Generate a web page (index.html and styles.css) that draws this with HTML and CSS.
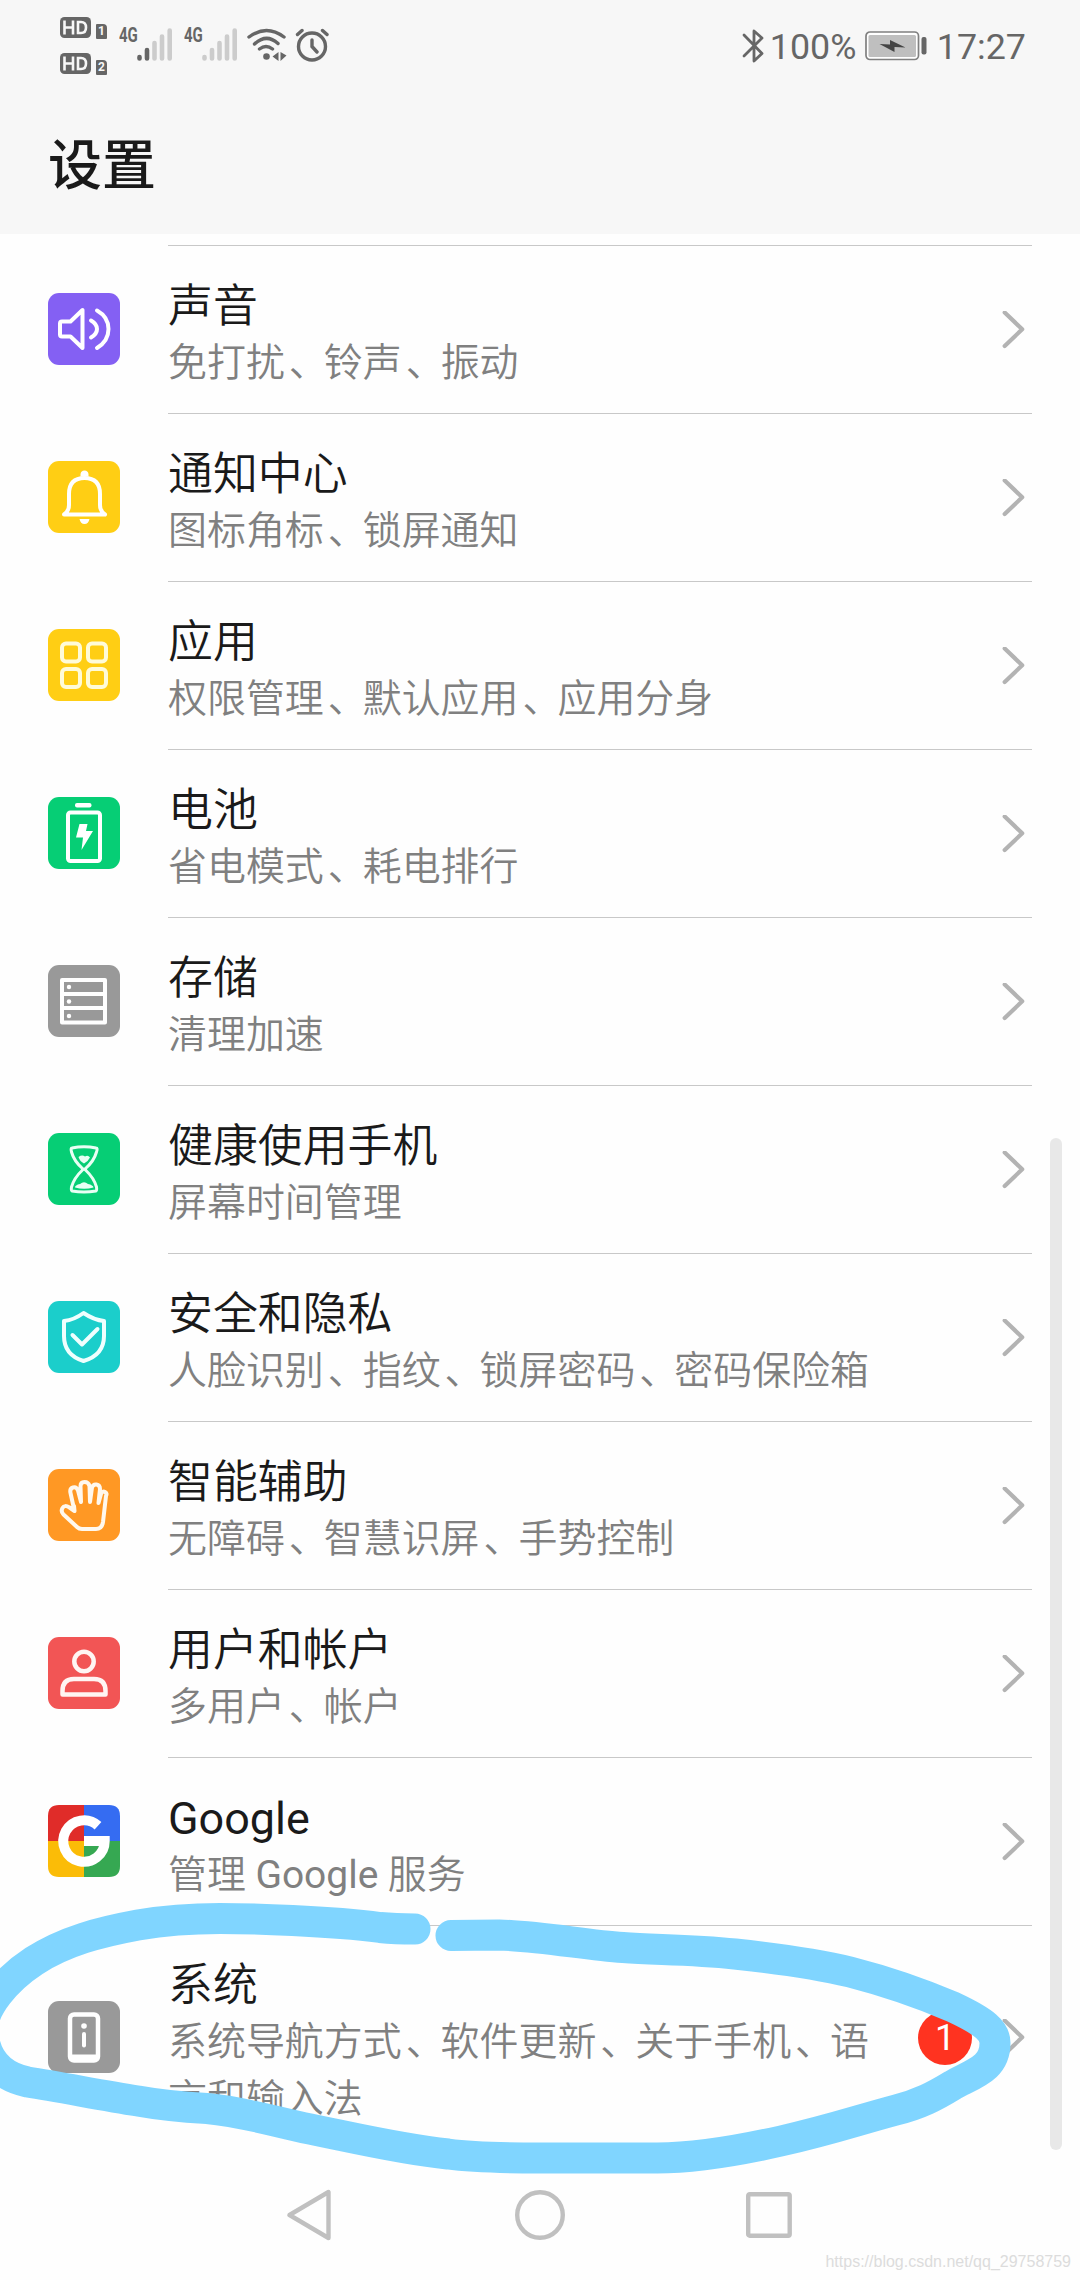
FILE: index.html
```html
<!DOCTYPE html>
<html lang="zh-CN">
<head>
<meta charset="utf-8">
<title>设置</title>
<link rel="stylesheet" href="styles.css">
</head>
<body>
<div class="screen">
  <header class="header">
    <div class="status">
      <div class="hd-stack">
        <div class="hd-row">
          <svg width="31" height="21" viewBox="0 0 31 21"><rect width="31" height="21" rx="4.5" fill="#666"/><path d="M4.5 3.500V17.500M13 3.500V17.500M4.500 10.500H13M18 5V16H21Q26 16 26 10.500T21 5Z" fill="none" stroke="#f7f7f7" stroke-width="2.600"/></svg>
          <span class="sim">1</span>
        </div>
        <div class="hd-row">
          <svg width="31" height="21" viewBox="0 0 31 21"><rect width="31" height="21" rx="4.5" fill="#666"/><path d="M4.5 3.500V17.500M13 3.500V17.500M4.500 10.500H13M18 5V16H21Q26 16 26 10.500T21 5Z" fill="none" stroke="#f7f7f7" stroke-width="2.600"/></svg>
          <span class="sim">2</span>
        </div>
      </div>
      <div class="signal">
        <span class="net">4G</span>
        <svg width="36" height="34" viewBox="0 0 36 34" stroke-width="4.600" stroke-linecap="round"><path d="M2.500 29V30.500M10 22V30.500" stroke="#666"/><path d="M17.500 15V30.500M25 8.500V30.500M32.700 2.500V30.500" stroke="#ccc"/></svg>
      </div>
      <div class="signal">
        <span class="net">4G</span>
        <svg width="36" height="34" viewBox="0 0 36 34" stroke-width="4.600" stroke-linecap="round" stroke="#ccc"><path d="M2.500 29V30.500M10 22V30.500M17.500 15V30.500M25 8.500V30.500M32.700 2.500V30.500"/></svg>
      </div>
      <svg class="wifi" width="40" height="34" viewBox="0 0 40 34"><path d="M2 9Q19.500-4 37 9M7.500 16Q19.500 5 31 15.500M12.500 21Q19 16 25.500 21" fill="none" stroke="#666" stroke-width="3.400" stroke-linecap="round"/><circle cx="19.500" cy="28.500" r="3.300" fill="#666"/><path d="M25.500 28.500L31.500 24V33ZM33.500 24L39.500 27.500L33.500 33Z" fill="#666"/></svg>
      <svg class="alarm" width="34" height="34" viewBox="0 0 34 34" fill="none" stroke="#666" stroke-width="3.400" stroke-linecap="round"><circle cx="17" cy="18.500" r="13.500"/><path d="M2.500 6.500L7 2.500M27.500 2.500L32 6.500M17 12V18.500L22 24"/></svg>
      <div class="status-right">
        <svg width="22" height="36" viewBox="0 0 22 36" fill="none" stroke="#666" stroke-width="2.800" stroke-linejoin="round" stroke-linecap="round"><path d="M2 7L20 25.500L12 33V3L20 10L2 28"/></svg>
        <span class="pct">100%</span>
        <svg class="batt" width="62" height="30" viewBox="0 0 62 30"><rect x="1" y="1" width="52.500" height="27.500" rx="4" fill="#fff" stroke="#808080" stroke-width="1.700"/><rect x="3.500" y="4" width="47.500" height="22" rx="1.500" fill="#bfbfbf"/><path d="M14.500 13L25 13.500V9L40.500 16.500L29.500 16V21Z" fill="#444"/><rect x="56.500" y="6" width="5" height="17.500" rx="2" fill="#666"/></svg>
        <span class="time">17:27</span>
      </div>
    </div>
    <h1 class="heading">设置</h1>
  </header>

  <main class="list">
    <div class="row">
      <svg class="icon" viewBox="0 0 72 72"><rect width="72" height="72" rx="11" fill="#8460f3"/><g fill="none" stroke="#fff" stroke-width="4" stroke-linecap="round" stroke-linejoin="round"><path d="M12 30.500Q12 28.500 14 28.500H22.500L34.500 17V55L22.500 43.500H14Q12 43.500 12 41.500ZM43 27.500Q49 31 49 36T43 44.500M49 17.500Q60.500 24 60.500 36T49 55"/></g></svg>
      <div class="body"><div class="text"><div class="title">声音</div><div class="sub">免打扰<span class="sep">、</span>铃声<span class="sep">、</span>振动</div></div><svg class="chev" viewBox="0 0 24 38"><path d="M3.700 1.500L21.200 18.300L3.700 35"/></svg></div>
    </div>
    <div class="row">
      <svg class="icon" viewBox="0 0 72 72"><rect width="72" height="72" rx="11" fill="#ffce14"/><path d="M16 53.500Q21 50 21 44V33Q21 17 36.500 17T52 33V44Q52 50 57 53.500Z" fill="none" stroke="#fff" stroke-width="4" stroke-linejoin="round"/><path d="M32.500 15.500V13Q33 9.500 36.500 9.500T40.500 13V15.500ZM31.500 58H41.500Q40.500 63 36.500 63T31.500 58Z" fill="#fff"/></svg>
      <div class="body"><div class="text"><div class="title">通知中心</div><div class="sub">图标角标<span class="sep">、</span>锁屏通知</div></div><svg class="chev" viewBox="0 0 24 38"><path d="M3.700 1.500L21.200 18.300L3.700 35"/></svg></div>
    </div>
    <div class="row">
      <svg class="icon" viewBox="0 0 72 72"><rect width="72" height="72" rx="11" fill="#ffce14"/><g fill="none" stroke="#fffbd8" stroke-width="4"><rect x="14" y="14.500" width="18" height="18" rx="4"/><rect x="40" y="14.500" width="18" height="18" rx="4"/><rect x="14" y="40" width="18" height="18" rx="4"/><rect x="40" y="40" width="18" height="18" rx="4"/></g></svg>
      <div class="body"><div class="text"><div class="title">应用</div><div class="sub">权限管理<span class="sep">、</span>默认应用<span class="sep">、</span>应用分身</div></div><svg class="chev" viewBox="0 0 24 38"><path d="M3.700 1.500L21.200 18.300L3.700 35"/></svg></div>
    </div>
    <div class="row">
      <svg class="icon" viewBox="0 0 72 72"><rect width="72" height="72" rx="11" fill="#06ce75"/><rect x="27" y="6" width="16.500" height="4.500" rx="2" fill="#fff"/><rect x="20" y="15.500" width="32" height="48.500" rx="2.500" fill="none" stroke="#fff" stroke-width="4"/><path d="M31.500 27H39.500L38 34H45L33.500 53L35 40.500H28Z" fill="#fff"/></svg>
      <div class="body"><div class="text"><div class="title">电池</div><div class="sub">省电模式<span class="sep">、</span>耗电排行</div></div><svg class="chev" viewBox="0 0 24 38"><path d="M3.700 1.500L21.200 18.300L3.700 35"/></svg></div>
    </div>
    <div class="row">
      <svg class="icon" viewBox="0 0 72 72"><rect width="72" height="72" rx="11" fill="#999"/><path d="M14 15H57V57.500H14ZM14 29H57M14 43H57" fill="none" stroke="#fff" stroke-width="4" stroke-linejoin="round"/><g fill="#fff"><circle cx="21" cy="22" r="2.200"/><circle cx="21" cy="36.500" r="2.200"/><circle cx="21" cy="51" r="2.200"/></g></svg>
      <div class="body"><div class="text"><div class="title">存储</div><div class="sub">清理加速</div></div><svg class="chev" viewBox="0 0 24 38"><path d="M3.700 1.500L21.200 18.300L3.700 35"/></svg></div>
    </div>
    <div class="row">
      <svg class="icon" viewBox="0 0 72 72"><rect width="72" height="72" rx="11" fill="#06ce75"/><path d="M24 15Q36 12.500 48 15Q50 15 48.500 19Q46 28 37.500 35.500V37Q46 45 48.500 54Q49 57.500 48 58Q36 60 24 58Q23 57.500 23.500 54Q26 45 34.500 37V35.500Q26 28 23.500 19Q22.500 15 24 15Z" fill="none" stroke="#e8fff4" stroke-width="3"/><path d="M30.500 24Q34 21.500 37 23.500Q40 21.500 42 24.500Q40 28.500 36 30.500Q32 28.500 30.500 24ZM27 54.500Q27 52 32 51Q36 47.500 40 51Q45 52 45.500 54.500Q36 57 27 54.500Z" fill="#e8fff4"/></svg>
      <div class="body"><div class="text"><div class="title">健康使用手机</div><div class="sub">屏幕时间管理</div></div><svg class="chev" viewBox="0 0 24 38"><path d="M3.700 1.500L21.200 18.300L3.700 35"/></svg></div>
    </div>
    <div class="row">
      <svg class="icon" viewBox="0 0 72 72"><rect width="72" height="72" rx="11" fill="#1bcecb"/><path d="M35.500 12Q46 19 56 20V35Q56 54 35.500 60Q16 54 16 35V20Q26 19 35.500 12ZM24.500 34L34 43.500L49.500 28" fill="none" stroke="#effffe" stroke-width="4" stroke-linecap="round" stroke-linejoin="round"/></svg>
      <div class="body"><div class="text"><div class="title">安全和隐私</div><div class="sub">人脸识别<span class="sep">、</span>指纹<span class="sep">、</span>锁屏密码<span class="sep">、</span>密码保险箱</div></div><svg class="chev" viewBox="0 0 24 38"><path d="M3.700 1.500L21.200 18.300L3.700 35"/></svg></div>
    </div>
    <div class="row">
      <svg class="icon" viewBox="0 0 72 72"><rect width="72" height="72" rx="11" fill="#ff9824"/><path d="M26.500 42L22.500 24Q21.500 19.500 25 18.500T30 21.500L33 33L32.500 17Q32.500 13 36.500 13T41.500 17L42 33L44 18.500Q45 15 48.500 15.500T52 20L50.500 34L53 25Q54.500 21.500 57 23T58 27L55 53Q54 60 48 60H34Q31 60 29 58L15.500 45.500Q12.500 42.500 14.500 39T21.500 38.500L26.500 42L26 37" fill="none" stroke="#fff8ee" stroke-width="4" stroke-linecap="round" stroke-linejoin="round"/></svg>
      <div class="body"><div class="text"><div class="title">智能辅助</div><div class="sub">无障碍<span class="sep">、</span>智慧识屏<span class="sep">、</span>手势控制</div></div><svg class="chev" viewBox="0 0 24 38"><path d="M3.700 1.500L21.200 18.300L3.700 35"/></svg></div>
    </div>
    <div class="row">
      <svg class="icon" viewBox="0 0 72 72"><rect width="72" height="72" rx="11" fill="#f25555"/><g fill="none" stroke="#fff5f3" stroke-width="4.500" stroke-linejoin="round"><circle cx="36" cy="24.500" r="9.700"/><path d="M14.500 57.500V54Q14.500 42 26 42H46Q57.500 42 57.500 54V57.500Z"/></g></svg>
      <div class="body"><div class="text"><div class="title">用户和帐户</div><div class="sub">多用户<span class="sep">、</span>帐户</div></div><svg class="chev" viewBox="0 0 24 38"><path d="M3.700 1.500L21.200 18.300L3.700 35"/></svg></div>
    </div>
    <div class="row">
      <svg class="icon" viewBox="0 0 72 72"><path d="M36 0H11Q0 0 0 11V36H36Z" fill="#e02c29"/><path d="M36 0H61Q72 0 72 11V36H36Z" fill="#356cf2"/><path d="M0 36V61Q0 72 11 72H36V36Z" fill="#fbbc07"/><path d="M36 36H72V61Q72 72 61 72H36Z" fill="#36a852"/><path d="M50 20.800A20.700 20.700 0 1 0 56.700 36H36" fill="none" stroke="#fff" stroke-width="10"/></svg>
      <div class="body"><div class="text"><div class="title latin">Google</div><div class="sub">管理 <span class="latin">Google</span> 服务</div></div><svg class="chev" viewBox="0 0 24 38"><path d="M3.700 1.500L21.200 18.300L3.700 35"/></svg></div>
    </div>
    <div class="row row-tall">
      <svg class="icon" viewBox="0 0 72 72"><rect width="72" height="72" rx="11" fill="#999"/><rect x="22" y="13.500" width="28" height="46" rx="4" fill="none" stroke="#fff" stroke-width="4.500"/><path d="M24 56.500H48" stroke="#fff" stroke-width="6"/><circle cx="36" cy="25" r="2.800" fill="#fff"/><path d="M36 33V44.500" stroke="#fff" stroke-width="4" stroke-linecap="round"/></svg>
      <div class="body"><div class="text"><div class="title">系统</div><div class="sub">系统导航方式<span class="sep">、</span>软件更新<span class="sep">、</span>关于手机<span class="sep">、</span>语言和输入法</div></div><span class="badge">1</span><svg class="chev" viewBox="0 0 24 38"><path d="M3.700 1.500L21.200 18.300L3.700 35"/></svg></div>
    </div>
  </main>

  <nav class="nav">
    <svg width="47" height="54" viewBox="0 0 47 54"><path d="M41.500 4V50L2.500 27Z"/></svg>
    <svg width="50" height="50" viewBox="0 0 50 50"><circle cx="25" cy="25" r="22.800"/></svg>
    <svg width="46" height="46" viewBox="0 0 46 46"><rect x="2.200" y="2.200" width="41.500" height="41.500" rx="1.500"/></svg>
  </nav>

  <div class="scrollbar"></div>
  <svg class="marker" viewBox="0 1880 1080 400"><path d="M451 1935.500L499 1935C540 1936 585 1945 623 1947.500C655 1950 690 1949 735 1954C781 1959 825 1966 850 1972C885 1981 925 1995 953 2007C985 2022 995 2031 995 2043C995 2068 975 2073 953 2085C935 2096 920 2104 896 2110C855 2121 830 2130 781 2141C750 2148 700 2158 657 2158H540C500 2158 470 2157 448 2154C400 2149 355 2138 310 2129C275 2122 245 2112 207 2108.500C180 2107 160 2105 138 2101C100 2095 60 2087 27.500 2082C-2 2076-17 2055-17 2028C-17 2008 5 1980 34 1961C65 1941 100 1932 138 1925C170 1919.500 195 1918.500 220 1918.500C250 1918.500 330 1921 380 1927.500Q395 1929 415 1929"/></svg>
  <div class="watermark">https://blog.csdn.net/qq_29758759</div>
</div>
</body>
</html>
```
FILE: styles.css
```css
body {
  margin: 0;
  background: #fefefe;
  font-family: Roboto, "Noto Sans CJK SC", sans-serif;
}

.screen {
  position: relative;
  width: 1080px;
  height: 2280px;
  overflow: hidden;
  display: flex;
  flex-direction: column;
}

svg { display: block; flex: none; }

.header {
  height: 234px;
  flex: none;
  background: #f7f7f7;
}

.status {
  height: 92px;
  display: flex;
  align-items: flex-start;
  padding-left: 60px;
  padding-right: 54px;
  color: #666;
}

.hd-stack {
  padding-top: 17px;
  display: flex;
  flex-direction: column;
  gap: 15px;
  width: 59px;
}

.hd-row {
  display: flex;
  gap: 5px;
  height: 21px;
}

.sim {
  width: 11px;
  height: 15px;
  margin-top: 7px;
  background: #666;
  color: #f7f7f7;
  border-radius: 1px 4px 1px 1px;
  font-size: 12px;
  font-weight: 700;
  line-height: 15px;
  text-align: center;
}

.signal {
  display: flex;
  width: 65px;
  padding-top: 28px;
}

.net {
  width: 18px;
  font-size: 20px;
  line-height: 15px;
  font-weight: 700;
  transform: scaleX(0.75);
  transform-origin: left;
}

.wifi { margin: 28px 8px 0 -2px; }
.alarm { margin-top: 28px; }

.status-right {
  margin-left: auto;
  display: flex;
  height: 36px;
  padding-top: 28px;
  font-size: 35.8px;
  line-height: 38px;
}

.pct { margin-left: 6px; width: 95px; }
.batt { margin-top: 3px; }
.time { margin-left: 10px; }

.heading {
  margin: 0;
  padding-left: 48px;
  font-size: 54px;
  line-height: 76px;
  font-weight: 500;
  color: #1a1a1a;
  padding-top: 37px;
}

.list {
  padding: 11px 48px 0;
  height: 1915px;
  box-sizing: border-box;
  flex: none;
}

.row {
  display: flex;
  align-items: center;
  height: 168px;
}

.row-tall { height: 224px; }

.icon { width: 72px; height: 72px; margin-right: 48px; }

.body {
  flex: 1;
  height: 100%;
  box-sizing: border-box;
  border-top: 1px solid #c8c8c8;
  display: flex;
  align-items: center;
}

.text { flex: 1; }

.title {
  padding-top: 10px;
  font-size: 44.9px;
  line-height: 57px;
  color: #1a1a1a;
  font-weight: 350;
}

.sub {
  font-size: 38.95px;
  line-height: 57px;
  color: #808080;
  font-weight: 350;
  max-width: 710px;
}

.latin { font-weight: 400; }

.sep {
  margin-left: 4px;
  letter-spacing: -4px;
}

.chev {
  width: 24px;
  height: 38px;
  margin-right: 7px;
  fill: none;
  stroke: #b3b3b3;
  stroke-width: 4.2;
  stroke-linecap: round;
  stroke-linejoin: round;
}

.badge {
  width: 54px;
  height: 54px;
  border-radius: 50%;
  background: #ff3320;
  color: #fff;
  font-size: 36px;
  line-height: 54px;
  text-align: center;
  margin-right: 29px;
}

.nav {
  height: 131px;
  display: flex;
  align-items: center;
  padding: 0 288px 0 287px;
  justify-content: space-between;
  box-sizing: border-box;
}

.nav svg {
  fill: none;
  stroke: #c0c0c0;
  stroke-width: 4.4;
  stroke-linejoin: round;
}

.scrollbar {
  position: absolute;
  left: 1050px;
  top: 1138px;
  width: 12px;
  height: 1012px;
  border-radius: 6px;
  background: #e8e8e8;
}

.marker {
  position: absolute;
  left: 0;
  top: 1880px;
  width: 1080px;
  height: 400px;
  fill: none;
  stroke: #80d5ff;
  stroke-width: 31;
  stroke-linecap: round;
  stroke-linejoin: round;
}

.watermark {
  position: absolute;
  right: 9px;
  bottom: 8px;
  font: 16px/20px "Liberation Sans", sans-serif;
  color: #dcdcdc;
}
```
